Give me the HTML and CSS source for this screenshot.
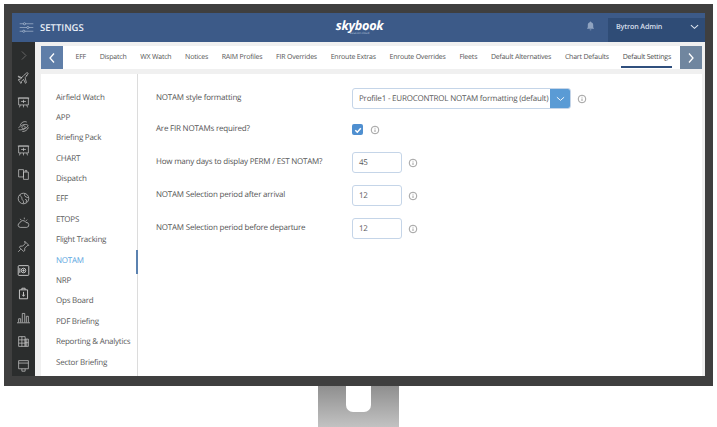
FILE: index.html
```html
<!DOCTYPE html>
<html lang="en">
<head>
<meta charset="utf-8">
<title>Settings</title>
<link rel="stylesheet" href="styles.css">
</head>
<body>
<div class="monitor">
  <div class="screen">
    <header class="topbar">
      <div class="title-group">
        <svg class="settings-icon" viewBox="0 0 22 16" fill="none" stroke="#c5d2e4" stroke-width=".8"><path d="M1 2.500h20M1 8h20M1 13.500h20"/><circle cx="8" cy="2.500" r="1.600" fill="#3c5a88"/><circle cx="13" cy="8" r="1.600" fill="#3c5a88"/><circle cx="7" cy="13.500" r="1.600" fill="#3c5a88"/></svg>
        <span class="title">SETTINGS</span>
      </div>
      <div class="logo"><span class="logo-name">skybook</span><span class="logo-sub">aviation cloud</span></div>
      <div class="user-group">
        <svg class="bell" viewBox="0 0 10 11" fill="#8fa3c0"><path d="M5 0.500c.5 0 .8.300.8.800 1.500.4 2.200 1.500 2.200 3V7l1 1.500H1L2 7V4.300c0-1.500.7-2.600 2.200-3 0-.5.3-.8.8-.8z"/><path d="M4 9.300h2a1 1 0 0 1-2 0z"/></svg>
        <div class="user"><span>Bytron Admin</span><svg class="user-chevron" viewBox="0 0 10 6" fill="none" stroke="#dfe6f0" stroke-width="1.200"><path d="M1 1l4 3.500L9 1"/></svg></div>
      </div>
    </header>
    <div class="body">
      <nav class="rail">
        <svg viewBox="0 0 16 16" class="rail-icon dim"><path d="M6 3l5 5-5 5"/></svg>
        <svg viewBox="0 0 16 16" class="rail-icon"><path d="M2 6.500l3 1 3-3 4-3.500c1-.5 2 .5 1.500 1.500L10 7l1.500 6-1 1-2.500-5-2.500 2.500v2l-1 .5-1-2.500L1.500 10l.5-1 2 0L6 7 1.500 5z"/><path d="M11 3.500l1.500 1.500"/></svg>
        <svg viewBox="0 0 16 16" class="rail-icon"><path d="M2 2.500h12v8.500H2zM1 2.500h14M5 6.700h6M8 4.700v4M4 11l-1 3M12 11l1 3M8 11v3"/></svg>
        <svg viewBox="0 0 16 16" class="rail-icon"><path d="M12 2.500C9 1 5 3 4 6.500M6.500 14c3 .5 6.500-1.500 7.500-5M2 9.500c2-3 8-5 11-3.500 1.500 1-.5 3.500-4 5-3 1.300-6 1.500-7 .5M8 7a2 2 0 1 0 .1 0"/></svg>
        <svg viewBox="0 0 16 16" class="rail-icon"><path d="M2 2.500h12v8.500H2zM1 2.500h14M5 6.700h6M8 4.700v4M4 11l-1 3M12 11l1 3M8 11v3"/></svg>
        <svg viewBox="0 0 16 16" class="rail-icon"><path d="M2 2h6v9H2zM8 5h6v9H8zM10 5V3h2v2"/></svg>
        <svg viewBox="0 0 16 16" class="rail-icon"><circle cx="8" cy="8" r="6.500"/><path d="M3 4c2 1 3 2 3 4s2 2 2 4v2M10 2c-1 2-1 3 1 4s3 1 3 1M10 9l2 1-1 3"/></svg>
        <svg viewBox="0 0 16 16" class="rail-icon"><path d="M4 14a2.800 2.800 0 0 1-.5-5.500 4 4 0 0 1 7.500-.5 3 3 0 0 1 1 6zM9 4V2M5 5L4 3.500M12.500 4.500L11 6"/></svg>
        <svg viewBox="0 0 16 16" class="rail-icon"><path d="M9.500 1.500l5 5-2 .5-3 3 0 3-1.500 1-5-5 1-1.500 3 0 3-3zM4.500 11.500L1.500 14.500"/></svg>
        <svg viewBox="0 0 16 16" class="rail-icon thick"><rect x="1.500" y="2" width="13" height="12" rx="1"/><circle cx="8" cy="8" r="2.800"/><circle cx="8" cy="8" r=".9" fill="#c8c8c8"/><path d="M3.500 5v6"/></svg>
        <svg viewBox="0 0 16 16" class="rail-icon thick"><path d="M3 3.500h10v11H3zM6 3.500V1.500h4v2M8 6v5"/><path d="M6.500 9.500L8 11.500l1.500-2"/></svg>
        <svg viewBox="0 0 16 16" class="rail-icon"><path d="M0 14.500h16M2 14V9.500h2.500V14M6.500 14V3h3v11M11.500 14V6.500h2.500V14"/></svg>
        <svg viewBox="0 0 16 16" class="rail-icon"><path d="M2 2h8v12H2zM10 5h4v9h-4zM2 6h8M2 10h8M6 2v12M12 5v9M10 9.500h4"/></svg>
        <svg viewBox="0 0 16 16" class="rail-icon"><path d="M2 2h12v10H2zM2 5h12M6 12v3h4v-3"/></svg>
      </nav>
      <div class="content">
        <div class="tabs">
          <button class="arrow" type="button"><svg viewBox="0 0 8 12" fill="none" stroke="#fff" stroke-width="1.300"><path d="M6 1.500L2 6l4 4.500"/></svg></button>
          <div class="tab-list">
            <span class="tab">EFF</span>
            <span class="tab">Dispatch</span>
            <span class="tab">WX Watch</span>
            <span class="tab">Notices</span>
            <span class="tab">RAIM Profiles</span>
            <span class="tab">FIR Overrides</span>
            <span class="tab">Enroute Extras</span>
            <span class="tab">Enroute Overrides</span>
            <span class="tab">Fleets</span>
            <span class="tab">Default Alternatives</span>
            <span class="tab">Chart Defaults</span>
            <span class="tab active">Default Settings</span>
          </div>
          <button class="arrow arrow-right" type="button"><svg viewBox="0 0 8 12" fill="none" stroke="#fff" stroke-width="1.300"><path d="M2 1.500L6 6l-4 4.500"/></svg></button>
        </div>
        <div class="panel">
          <ul class="menu">
            <li>Airfield Watch</li>
            <li>APP</li>
            <li>Briefing Pack</li>
            <li>CHART</li>
            <li>Dispatch</li>
            <li>EFF</li>
            <li>ETOPS</li>
            <li>Flight Tracking</li>
            <li class="selected">NOTAM</li>
            <li>NRP</li>
            <li>Ops Board</li>
            <li>PDF Briefing</li>
            <li>Reporting &amp; Analytics</li>
            <li>Sector Briefing</li>
          </ul>
          <section class="form">
            <div class="row row-select">
              <label>NOTAM style formatting</label>
              <div class="select"><span class="select-value">Profile1 - EUROCONTROL NOTAM formatting (default)</span><span class="select-btn"><svg viewBox="0 0 10 6" fill="none" stroke="#fff" stroke-width="1"><path d="M1 1l4 3.500L9 1"/></svg></span></div>
              <svg class="info" viewBox="0 0 10 10"><circle cx="5" cy="5" r="3.800"/><path d="M5 4.500v2.500M5 2.800v.8"/></svg>
            </div>
            <div class="row row-check">
              <label>Are FIR NOTAMs required?</label>
              <span class="check"><svg viewBox="0 0 10 10" fill="none" stroke="#fff" stroke-width="1.500"><path d="M2.300 5.200l2 2 3.500-4"/></svg></span>
              <svg class="info" viewBox="0 0 10 10"><circle cx="5" cy="5" r="3.800"/><path d="M5 4.500v2.500M5 2.800v.8"/></svg>
            </div>
            <div class="row row-num">
              <label>How many days to display PERM / EST NOTAM?</label>
              <span class="num">45</span>
              <svg class="info" viewBox="0 0 10 10"><circle cx="5" cy="5" r="3.800"/><path d="M5 4.500v2.500M5 2.800v.8"/></svg>
            </div>
            <div class="row row-num">
              <label>NOTAM Selection period after arrival</label>
              <span class="num">12</span>
              <svg class="info" viewBox="0 0 10 10"><circle cx="5" cy="5" r="3.800"/><path d="M5 4.500v2.500M5 2.800v.8"/></svg>
            </div>
            <div class="row row-num">
              <label>NOTAM Selection period before departure</label>
              <span class="num">12</span>
              <svg class="info" viewBox="0 0 10 10"><circle cx="5" cy="5" r="3.800"/><path d="M5 4.500v2.500M5 2.800v.8"/></svg>
            </div>
          </section>
        </div>
      </div>
    </div>
  </div>
</div>
<div class="stand"><div class="notch"></div></div>
</body>
</html>
```

FILE: styles.css
```css
* { box-sizing: border-box; }
html, body { margin: 0; padding: 0; }
body {
  width: 717px;
  height: 427px;
  overflow: hidden;
  background: #fff;
  font-family: "Open Sans", "Noto Sans", sans-serif;
  color: #555;
  padding-top: 4px;
  text-rendering: geometricPrecision;
}
.monitor {
  width: 709px;
  height: 382px;
  margin-left: 4px;
  padding: 9px 8px 10px 8px;
  background: #3f3f3f;
}
.screen {
  width: 693px;
  height: 363px;
  display: flex;
  flex-direction: column;
  background: #f0f0f0;
  overflow: hidden;
}
.topbar {
  height: 29px;
  flex: none;
  background: #3c5a88;
  display: flex;
  align-items: center;
  justify-content: space-between;
  position: relative;
}
.title-group { display: flex; align-items: center; padding-left: 7px; gap: 6px; }
.settings-icon { width: 15px; height: 15px; }
.title { color: #e8eef6; font-size: 9.500px; font-weight: 600; }
.logo {
  position: absolute;
  left: 324px;
  top: 6px;
  width: 47px;
  display: flex;
  flex-direction: column;
  align-items: center;
}
.logo-name { color: #fff; font-size: 12.700px; line-height: 12px; font-weight: 700; font-style: italic; letter-spacing: -.3px; }
.logo-sub { color: #b9c7dc; font-size: 3px; line-height: 4px; }
.user-group { display: flex; align-items: stretch; height: 100%; gap: 13px; }
.bell { width: 9px; height: 10px; align-self: center; margin-bottom: 3px; }
.user {
  width: 97px;
  height: 24px;
  margin-top: 5px;
  background: #2f4c76;
  color: #d6dfeb;
  font-size: 7.200px;
  font-weight: 600;
  letter-spacing: -.15px;
  display: flex;
  align-items: flex-start;
  justify-content: space-between;
  padding: 4px 6px 0 8px;
}
.user-chevron { width: 9px; height: 6px; margin-top: 2px; }
.body { flex: 1; display: flex; min-height: 0; }
.rail {
  width: 23px;
  flex: none;
  background: #2b2d2d;
  display: flex;
  flex-direction: column;
  align-items: center;
  padding-top: 6.500px;
  gap: 10.900px;
}
.rail-icon { width: 13px; height: 13px; fill: none; stroke: #c8c8c8; stroke-width: .9; flex: none; }
.rail-icon.dim { stroke: #666; stroke-width: 1.200; }
.rail-icon.thick { stroke-width: 1.200; }
.content { flex: 1; padding: 4px 0 0 6px; display: flex; flex-direction: column; min-width: 0; }
.tabs {
  height: 23px;
  flex: none;
  width: 661px;
  background: #fff;
  display: flex;
  align-items: stretch;
}
.arrow {
  width: 22px;
  flex: none;
  border: 0;
  padding: 0;
  background: #5f7ea8;
  display: flex;
  align-items: center;
  justify-content: center;
}
.arrow svg { width: 8px; height: 12px; }
.arrow-right { background: #70869f; margin-left: auto; }
.tab-list { flex: 1; min-width: 0; display: flex; padding-left: 12.500px; gap: 13.650px; }
.tab { position: relative; font-size: 7px; letter-spacing: -.2px; line-height: 24px; color: #555; white-space: nowrap; }
.tab.active { color: #4a4a4a; }
.tab.active::after {
  content: "";
  position: absolute;
  left: -2px;
  right: -1px;
  bottom: 1px;
  height: 2px;
  background: #2f4f7d;
}
.panel {
  flex: 1;
  width: 661px;
  margin-top: 5px;
  background: #fff;
  display: flex;
  min-height: 0;
}
.menu {
  width: 97px;
  flex: none;
  margin: 0;
  padding: 13.500px 0 0 15px;
  list-style: none;
  border-right: 1px solid #dcdcdc;
}
.menu li {
  height: 20.400px;
  line-height: 20.400px;
  font-size: 8px;
  letter-spacing: -.24px;
  color: #5a5a5a;
  white-space: nowrap;
}
.menu .selected { color: #5aa5e0; position: relative; }
.menu .selected::after {
  content: "";
  position: absolute;
  right: -1px;
  top: -1px;
  width: 2px;
  height: 24px;
  background: #5b82b0;
}
.form { flex: 1; padding-top: 14px; }
.row { display: flex; align-items: center; padding-left: 18px; font-size: 8px; letter-spacing: -.21px; color: #555; }
.row label { width: 196px; flex: none; position: relative; top: -1px; }
.row-select { height: 21px; margin-bottom: 14px; }
.row-check { height: 13px; margin-bottom: 16px; }
.row-num { height: 21px; margin-bottom: 12px; }
.select {
  width: 219px;
  height: 21px;
  border: 1px solid #c5d5e8;
  border-radius: 3px;
  display: flex;
  overflow: hidden;
}
.select-value { flex: 1; padding: 0 0 0 6px; line-height: 19px; white-space: nowrap; overflow: hidden; color: #5a5a5a; }
.select-btn { width: 20px; flex: none; background: #5a9bd5; display: flex; align-items: center; justify-content: center; }
.select-btn svg { width: 9px; height: 6px; }
.info { width: 10px; height: 10px; fill: none; stroke: #777; stroke-width: .7; flex: none; margin-left: 6px; }
.row-check .info { margin-left: 7px; }
.check {
  width: 11px;
  height: 11px;
  background: #4f8fd0;
  border-radius: 2px;
  display: flex;
  align-items: center;
  justify-content: center;
}
.check svg { width: 10px; height: 10px; }
.num {
  width: 50px;
  height: 21px;
  border: 1px solid #c5d5e8;
  border-radius: 3px;
  padding-left: 6px;
  line-height: 19px;
  color: #5a5a5a;
}
.stand {
  width: 81px;
  height: 41px;
  margin-left: 318px;
  background: linear-gradient(#8f8f8f, #c2c2c2);
  display: flex;
  justify-content: center;
}
.notch { width: 25px; height: 26px; background: #fff; border-radius: 0 0 7px 7px; }
```
